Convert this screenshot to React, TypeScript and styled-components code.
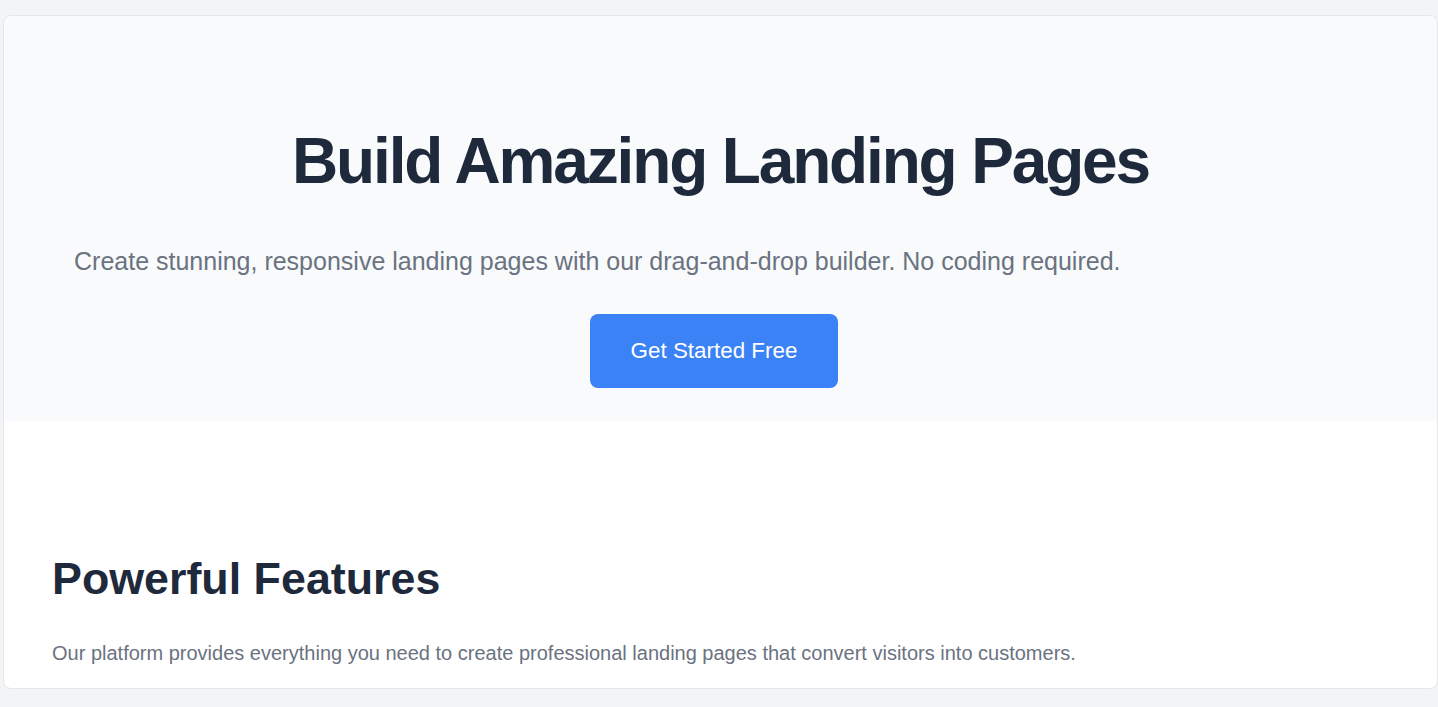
import styled, { createGlobalStyle } from 'styled-components';

const GlobalStyle = createGlobalStyle`
  html, body {
    margin: 0;
    padding: 0;
    background: #f3f4f6;
    font-family: "Liberation Sans", Arial, sans-serif;
  }
  * {
    box-sizing: border-box;
  }
`;

const App = () => {
  return (
    <>
      <GlobalStyle />
      <Page>
        <Canvas>
          <Hero>
            <Title>Build Amazing Landing Pages</Title>
            <Subtitle>
              Create stunning, responsive landing pages with our drag-and-drop
              builder. No coding required.
            </Subtitle>
            <CtaRow>
              <CtaButton type="button">Get Started Free</CtaButton>
            </CtaRow>
          </Hero>
          <Features>
            <SectionTitle>Powerful Features</SectionTitle>
            <SectionText>
              Our platform provides everything you need to create professional
              landing pages that convert visitors into customers.
            </SectionText>
          </Features>
        </Canvas>
      </Page>
    </>
  );
};

export default App;

const Page = styled.div`
  height: 707px;
  padding: 15px 0 0 3px;
  overflow: hidden;
`;

const Canvas = styled.div`
  width: 1435px;
  height: 674px;
  background: #ffffff;
  border: 1px solid #e5e7eb;
  border-radius: 8px;
  overflow: hidden;
`;

const Hero = styled.section`
  background: #f8fafc;
  padding: 107px 70px 33px;
  display: flex;
  flex-direction: column;
`;

const Title = styled.h1`
  margin: 0 0 43px;
  font-size: 64px;
  line-height: 1.2;
  font-weight: 700;
  color: #1e293b;
  text-align: center;
  letter-spacing: -2.15px;
`;

const Subtitle = styled.p`
  margin: 0 0 35px;
  font-size: 25px;
  line-height: 36px;
  color: #6b7280;
`;

const CtaRow = styled.div`
  display: flex;
  justify-content: center;
  padding-right: 13px;
`;

const CtaButton = styled.button`
  border: none;
  border-radius: 8px;
  background: #3b82f6;
  color: #ffffff;
  font-family: inherit;
  font-size: 22.4px;
  line-height: 1.15;
  padding: 24px 41px;
  cursor: pointer;
`;

const Features = styled.section`
  padding: 131px 48px 40px;
`;

const SectionTitle = styled.h2`
  margin: 0 0 33px;
  font-size: 44.8px;
  line-height: 1.2;
  font-weight: 700;
  color: #1e293b;
`;

const SectionText = styled.p`
  margin: 0;
  font-size: 20px;
  line-height: 30px;
  color: #6b7280;
`;
